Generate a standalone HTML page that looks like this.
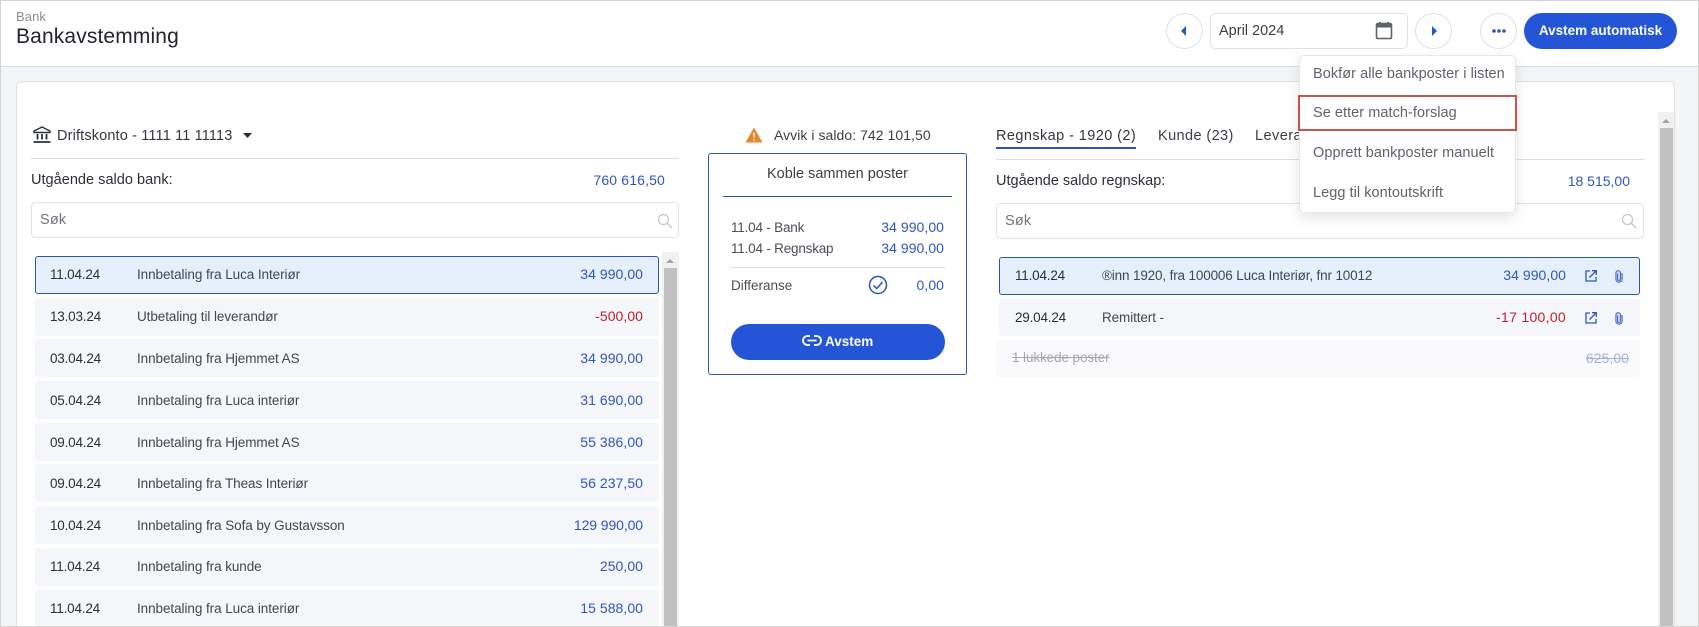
<!DOCTYPE html>
<html><head><meta charset="utf-8"><style>
*{box-sizing:border-box}
html,body{margin:0;padding:0;overflow:hidden;width:1699px;height:627px}
body{position:relative;background:#f4f5f7;font-family:"Liberation Sans",sans-serif;font-size:14px;color:#2b2f36}
.a{position:absolute;white-space:nowrap}
.t{position:absolute;white-space:nowrap;line-height:18px;height:18px}
.r{text-align:right}
.b{color:#2f55c4}
.red{color:#c0202c}
.row{position:absolute;height:38px;background:#f5f6f9;border-radius:3px}
.sel{background:#e6effc;border:1.5px solid #2a55a8;border-radius:3px}
.circ{position:absolute;width:37px;height:36px;top:13px;border:1px solid #dfe1e5;border-radius:50%;background:#fff}
.inp{position:absolute;background:#fff;border:1px solid #dfe1e5;border-radius:5px}
.hr{position:absolute;height:1px;background:#dcdee2}
.menu{color:#5f6369;font-size:14.5px;letter-spacing:.05px}
.dt{font-size:13.5px;letter-spacing:-.2px;margin-top:1px}
.ds{font-size:13.5px;letter-spacing:-.07px;color:#43474e;margin-top:1px}
.am{font-size:14px;letter-spacing:.05px}
.cl{font-size:13.5px;color:#4a4e55;letter-spacing:-.2px;margin-top:1px}
</style></head><body>
<div class="a" style="left:0;top:0;width:1699px;height:67px;background:#fff;border-bottom:1px solid #d9dbdf"></div>
<div class="t" style="left:16px;top:8px;font-size:13px;color:#8a8d92;letter-spacing:.1px">Bank</div>
<div class="t" style="left:16px;top:24px;font-size:21px;height:26px;line-height:26px;color:#22262c;letter-spacing:.13px">Bankavstemming</div>

<div class="circ" style="left:1166px"></div>
<svg class="a" style="left:1180px;top:26px" width="8" height="10"><path d="M6 0V10L1 5Z" fill="#2455d6"/></svg>
<div class="inp" style="left:1210px;top:13px;width:198px;height:36px"></div>
<div class="t" style="left:1219px;top:22px;font-size:14.5px;color:#3a3e45">April 2024</div>
<svg class="a" style="left:1375px;top:21px" width="18" height="19" viewBox="0 0 18 19"><path d="M3 2.500H15Q16.500 2.500 16.500 4V16Q16.500 17.500 15 17.500H3Q1.500 17.500 1.500 16V4Q1.500 2.500 3 2.500Z" fill="none" stroke="#5f6266" stroke-width="1.600"/><rect x="1.500" y="2.500" width="15" height="4" fill="#5f6266"/><rect x="4" y="1" width="2" height="2" fill="#5f6266"/><rect x="12" y="1" width="2" height="2" fill="#5f6266"/></svg>
<div class="circ" style="left:1415px"></div>
<svg class="a" style="left:1430px;top:26px" width="8" height="10"><path d="M2 0V10L7 5Z" fill="#2455d6"/></svg>
<div class="circ" style="left:1480px"></div>
<svg class="a" style="left:1491px;top:28px" width="16" height="6"><circle cx="3" cy="3" r="1.800" fill="#2d55c0"/><circle cx="8" cy="3" r="1.800" fill="#2d55c0"/><circle cx="13" cy="3" r="1.800" fill="#2d55c0"/></svg>
<div class="a" style="left:1524px;top:13px;width:153px;height:36px;border-radius:18px;background:#2455d6;color:#fff;font-weight:bold;font-size:13.5px;line-height:36px;text-align:center">Avstem automatisk</div>

<div class="a" style="left:16px;top:81px;width:1659px;height:560px;background:#fff;border:1px solid #dfe1e5;border-radius:6px"></div>

<!-- left head -->
<svg class="a" style="left:33px;top:126px" width="18" height="18" viewBox="0 0 18 18"><path d="M9 1L17 5V6.500H1V5Z" fill="none" stroke="#2b2f36" stroke-width="1.400"/><path d="M4.500 8V13.500M9 8V13.500M13.500 8V13.500" stroke="#2b2f36" stroke-width="1.800"/><path d="M.5 16H17.500" stroke="#2b2f36" stroke-width="1.800"/></svg>
<div class="t" style="left:57px;top:127px;font-size:14.5px;color:#33373d;letter-spacing:.15px">Driftskonto - 1111 11 11113</div>
<svg class="a" style="left:242px;top:132px" width="11" height="7"><path d="M1 1H10L5.500 6Z" fill="#2b2f36"/></svg>
<div class="hr" style="left:31px;top:158px;width:648px"></div>
<div class="t" style="left:31px;top:171px;font-size:14.5px;letter-spacing:.03px">Utgående saldo bank:</div>
<div class="t r b" style="right:1034px;top:171px;font-size:14px;letter-spacing:.15px">760 616,50</div>
<div class="inp" style="left:31px;top:202px;width:648px;height:36px"></div>
<div class="t" style="left:40px;top:211px;font-size:14.5px;color:#70747a;letter-spacing:.2px">Søk</div>
<svg class="a" style="left:657px;top:213px" width="16" height="16" viewBox="0 0 16 16"><circle cx="6.500" cy="6.500" r="5" fill="none" stroke="#c4c6ca" stroke-width="1.300"/><path d="M10.500 10.500L15 15" stroke="#c4c6ca" stroke-width="1.300"/></svg>

<!-- left list -->
<div class="row sel" style="left:35px;top:256px;width:624px"></div>
<div class="row" style="left:35px;top:298px;width:624px"></div>
<div class="row" style="left:35px;top:339px;width:624px"></div>
<div class="row" style="left:35px;top:381px;width:624px"></div>
<div class="row" style="left:35px;top:423px;width:624px"></div>
<div class="row" style="left:35px;top:464px;width:624px"></div>
<div class="row" style="left:35px;top:506px;width:624px"></div>
<div class="row" style="left:35px;top:548px;width:624px"></div>
<div class="row" style="left:35px;top:590px;width:624px;height:36px"></div>

<div class="t dt" style="left:50px;top:265px">11.04.24</div><div class="t ds" style="left:137px;top:265px">Innbetaling fra Luca Interiør</div><div class="t r b am" style="right:1056px;top:265px">34 990,00</div>
<div class="t dt" style="left:50px;top:307px">13.03.24</div><div class="t ds" style="left:137px;top:307px">Utbetaling til leverandør</div><div class="t r red am" style="right:1056px;top:307px">-500,00</div>
<div class="t dt" style="left:50px;top:349px">03.04.24</div><div class="t ds" style="left:137px;top:349px">Innbetaling fra Hjemmet AS</div><div class="t r b am" style="right:1056px;top:349px">34 990,00</div>
<div class="t dt" style="left:50px;top:391px">05.04.24</div><div class="t ds" style="left:137px;top:391px">Innbetaling fra Luca interiør</div><div class="t r b am" style="right:1056px;top:391px">31 690,00</div>
<div class="t dt" style="left:50px;top:433px">09.04.24</div><div class="t ds" style="left:137px;top:433px">Innbetaling fra Hjemmet AS</div><div class="t r b am" style="right:1056px;top:433px">55 386,00</div>
<div class="t dt" style="left:50px;top:474px">09.04.24</div><div class="t ds" style="left:137px;top:474px">Innbetaling fra Theas Interiør</div><div class="t r b am" style="right:1056px;top:474px">56 237,50</div>
<div class="t dt" style="left:50px;top:516px">10.04.24</div><div class="t ds" style="left:137px;top:516px">Innbetaling fra Sofa by Gustavsson</div><div class="t r b am" style="right:1056px;top:516px;letter-spacing:-.1px">129 990,00</div>
<div class="t dt" style="left:50px;top:557px">11.04.24</div><div class="t ds" style="left:137px;top:557px">Innbetaling fra kunde</div><div class="t r b am" style="right:1056px;top:557px">250,00</div>
<div class="t dt" style="left:50px;top:599px">11.04.24</div><div class="t ds" style="left:137px;top:599px">Innbetaling fra Luca interiør</div><div class="t r b am" style="right:1056px;top:599px">15 588,00</div>

<!-- left scrollbar -->
<div class="a" style="left:662px;top:252px;width:17px;height:375px;background:#f1f1f1"></div>
<div class="a" style="left:664px;top:268px;width:13px;height:359px;background:#c1c1c1"></div>
<svg class="a" style="left:666px;top:258px" width="9" height="6"><path d="M0 5H8L4 1Z" fill="#a3a3a3"/></svg>

<!-- centre -->
<svg class="a" style="left:745px;top:127px" width="18" height="16" viewBox="0 0 18 16"><path d="M9 .5L17.500 15.500H.5Z" fill="#e8862a"/><path d="M9 5.500V10.500M9 12V13.500" stroke="#fff" stroke-width="1.500"/></svg>
<div class="t" style="left:774px;top:126px;font-size:14px;color:#3a3e45;letter-spacing:.05px">Avvik i saldo: 742 101,50</div>
<div class="a" style="left:708px;top:153px;width:259px;height:222px;border:1.500px solid #2a55a8;border-radius:3px;background:#fff"></div>
<div class="t" style="left:708px;width:259px;text-align:center;top:165px;font-size:14.500px;color:#3a3e45">Koble sammen poster</div>
<div class="a" style="left:723px;top:196px;width:229px;height:1px;background:#2a55a8"></div>
<div class="t cl" style="left:731px;top:218px">11.04 - Bank</div>
<div class="t r b am" style="right:755px;top:218px">34 990,00</div>
<div class="t cl" style="left:731px;top:239px">11.04 - Regnskap</div>
<div class="t r b am" style="right:755px;top:239px">34 990,00</div>
<div class="hr" style="left:731px;top:267px;width:214px"></div>
<div class="t cl" style="left:731px;top:276px;letter-spacing:0">Differanse</div>
<svg class="a" style="left:868px;top:275px" width="20" height="20" viewBox="0 0 20 20"><circle cx="10" cy="10" r="8.500" fill="none" stroke="#2a55b8" stroke-width="1.500"/><path d="M5.500 10.500L8.800 13.500L14.500 7" fill="none" stroke="#2a55b8" stroke-width="1.500"/></svg>
<div class="t r b am" style="right:755px;top:276px">0,00</div>
<div class="a" style="left:731px;top:324px;width:214px;height:36px;border-radius:18px;background:#2455d6"></div>
<svg class="a" style="left:802px;top:334px" width="20" height="13" viewBox="0 0 20 13"><path d="M8 2H5.500a4.300 4.300 0 0 0 0 9H8M12 2h2.500a4.300 4.300 0 0 1 0 9H12M5.500 6.500H14.500" fill="none" stroke="#fff" stroke-width="1.800"/></svg>
<div class="t" style="left:825px;top:333px;font-size:13.5px;font-weight:bold;color:#fff">Avstem</div>

<!-- right head -->
<div class="t" style="left:996px;top:127px;font-size:14.500px;color:#33373d;letter-spacing:.42px">Regnskap - 1920 (2)</div>
<div class="a" style="left:996px;top:147px;width:140px;height:1.500px;background:#2a55a8"></div>
<div class="t" style="left:1158px;top:127px;font-size:14.500px;color:#3a3e45;letter-spacing:.4px">Kunde (23)</div>
<div class="t" style="left:1255px;top:127px;font-size:14.500px;color:#3a3e45;letter-spacing:.45px">Levera</div>
<div class="hr" style="left:996px;top:159px;width:648px"></div>
<div class="t" style="left:996px;top:172px;font-size:14.500px">Utgående saldo regnskap:</div>
<div class="t r b" style="right:69px;top:172px;font-size:14px">18 515,00</div>
<div class="inp" style="left:996px;top:203px;width:648px;height:36px"></div>
<div class="t" style="left:1005px;top:212px;font-size:14.500px;color:#70747a;letter-spacing:.2px">Søk</div>
<svg class="a" style="left:1621px;top:213px" width="16" height="16" viewBox="0 0 16 16"><circle cx="6.500" cy="6.500" r="5" fill="none" stroke="#c4c6ca" stroke-width="1.300"/><path d="M10.500 10.500L15 15" stroke="#c4c6ca" stroke-width="1.300"/></svg>

<!-- right rows -->
<div class="row sel" style="left:999px;top:257px;width:641px"></div>
<div class="row" style="left:999px;top:299px;width:641px;height:37px"></div>
<div class="row" style="left:996px;top:340px;width:644px;height:37px;background:#fafafc"></div>
<div class="t dt" style="left:1015px;top:266px">11.04.24</div>
<div class="t ds" style="left:1102px;top:266px;letter-spacing:-.15px">®inn 1920, fra 100006 Luca Interiør, fnr 10012</div>
<div class="t r b am" style="right:133px;top:266px">34 990,00</div>
<div class="t dt" style="left:1015px;top:308px">29.04.24</div>
<div class="t ds" style="left:1102px;top:308px;letter-spacing:-.1px">Remittert -</div>
<div class="t r red am" style="right:133px;top:308px;letter-spacing:.3px">-17 100,00</div>
<div class="t" style="left:1012px;top:349px;font-size:13.500px;letter-spacing:-.1px;color:#a6a8ac;text-decoration:line-through">1 lukkede poster</div>
<div class="t r am" style="right:70px;top:349px;color:#a3b0dc;text-decoration:line-through">625,00</div>

<svg class="a" style="left:1585px;top:270px" width="12" height="12" viewBox="0 0 12 12"><path d="M5 1H1V11H11V7" fill="none" stroke="#2f55c4" stroke-width="1.300"/><path d="M4.500 7.500L11 1M7 .700H11.300V5" fill="none" stroke="#2f55c4" stroke-width="1.300"/></svg>
<svg class="a" style="left:1615px;top:270px" width="8" height="13" viewBox="0 0 8 13"><path d="M2.500 3.500V9a1.500 1.500 0 0 0 3 0V3a2.300 2.300 0 0 0-4.600 0V9.200a3.100 3.100 0 0 0 6.200 0V3" fill="#cdd8f2" stroke="#4a6cc8" stroke-width="1.100"/></svg>
<svg class="a" style="left:1585px;top:312px" width="12" height="12" viewBox="0 0 12 12"><path d="M5 1H1V11H11V7" fill="none" stroke="#2f55c4" stroke-width="1.300"/><path d="M4.500 7.500L11 1M7 .700H11.300V5" fill="none" stroke="#2f55c4" stroke-width="1.300"/></svg>
<svg class="a" style="left:1615px;top:312px" width="8" height="13" viewBox="0 0 8 13"><path d="M2.500 3.500V9a1.500 1.500 0 0 0 3 0V3a2.300 2.300 0 0 0-4.600 0V9.200a3.100 3.100 0 0 0 6.200 0V3" fill="#cdd8f2" stroke="#4a6cc8" stroke-width="1.100"/></svg>

<!-- right scrollbar -->
<div class="a" style="left:1658px;top:112px;width:16px;height:515px;background:#f1f1f1"></div>
<div class="a" style="left:1660px;top:128px;width:13px;height:499px;background:#c1c1c1"></div>
<svg class="a" style="left:1662px;top:118px" width="9" height="6"><path d="M0 5H8L4 1Z" fill="#a3a3a3"/></svg>

<!-- dropdown -->
<div class="a" style="left:1299px;top:55px;width:217px;height:158px;background:#fff;border:1px solid #e6e7ea;border-radius:5px;box-shadow:0 5px 14px rgba(0,0,0,.1)"></div>
<div class="a" style="left:1298px;top:95px;width:219px;height:36px;border:2px solid #c9524e"></div>
<div class="t menu" style="left:1313px;top:65px">Bokfør alle bankposter i listen</div>
<div class="t menu" style="left:1313px;top:104px">Se etter match-forslag</div>
<div class="t menu" style="left:1313px;top:144px">Opprett bankposter manuelt</div>
<div class="t menu" style="left:1313px;top:184px">Legg til kontoutskrift</div>

<!-- outer border -->
<div class="a" style="left:0;top:0;width:1699px;height:627px;border:1.500px solid #d4d4d4"></div>
</body></html>
